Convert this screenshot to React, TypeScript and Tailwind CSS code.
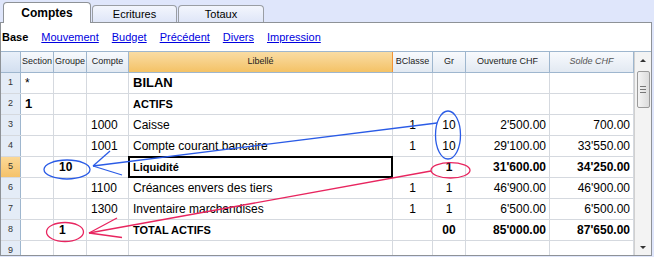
import React from 'react';

type RowData = {
  n: number;
  sec?: string;
  grp?: string;
  cpt?: string;
  lib?: string;
  bcl?: string;
  gr?: string;
  ouv?: string;
  sol?: string;
  bold?: boolean;
  secBold?: boolean;
  big?: boolean;
  selected?: boolean;
};

const rows: RowData[] = [
  { n: 1, sec: '*', lib: 'BILAN', big: true },
  { n: 2, sec: '1', secBold: true, lib: 'ACTIFS', bold: true },
  { n: 3, cpt: '1000', lib: 'Caisse', bcl: '1', gr: '10', ouv: "2'500.00", sol: '700.00' },
  { n: 4, cpt: '1001', lib: 'Compte courant bancaire', bcl: '1', gr: '10', ouv: "29'100.00", sol: "33'550.00" },
  { n: 5, grp: '10', lib: 'Liquidité', gr: '1', ouv: "31'600.00", sol: "34'250.00", bold: true, selected: true },
  { n: 6, cpt: '1100', lib: 'Créances envers des tiers', bcl: '1', gr: '1', ouv: "46'900.00", sol: "46'900.00" },
  { n: 7, cpt: '1300', lib: 'Inventaire marchandises', bcl: '1', gr: '1', ouv: "6'500.00", sol: "6'500.00" },
  { n: 8, grp: '1', lib: 'TOTAL ACTIFS', gr: '00', ouv: "85'000.00", sol: "87'650.00", bold: true },
  { n: 9 },
];

const cell = 'h-full shrink-0 border-r border-[#d5d9df] flex items-center';
const head = 'h-full shrink-0 border-r border-[#9eb6ce] flex items-center justify-center text-[9px] text-[#222] bg-linear-to-b from-[#f8fafd] to-[#e2e9f2]';

function Row({ r }: { r: RowData }) {
  const b = r.bold ? 'font-bold' : '';
  return (
    <div className="flex h-[21px] border-b border-[#d5d9df] text-[12px] text-black">
      <div
        className={
          'h-full w-[20px] shrink-0 border-r border-[#9eb6ce] flex items-center justify-center text-[9px] text-[#333] ' +
          (r.selected ? 'bg-linear-to-b from-[#fbd896] to-[#f5c26a]' : 'bg-[#e4ecf7]')
        }
      >
        {r.n}
      </div>
      <div className={cell + ' w-[33px] pl-[4px] ' + (r.secBold ? 'font-bold text-[13px]' : '')}>{r.sec}</div>
      <div className={cell + ' w-[33px] pl-[5px] font-bold'}>{r.grp}</div>
      <div className={cell + ' w-[42px] pl-[4px]'}>{r.cpt}</div>
      <div
        className={
          cell +
          ' relative w-[264px] pl-[4px] ' +
          (r.big ? 'font-bold text-[13px]' : r.bold ? 'font-bold text-[11px]' : '')
        }
      >
        {r.lib}
        {r.selected && (
          <div className="absolute -top-px -left-px -right-px -bottom-px border-2 border-black" />
        )}
      </div>
      <div className={cell + ' w-[40px] justify-center'}>{r.bcl}</div>
      <div className={cell + ' w-[33px] justify-center ' + b}>{r.gr}</div>
      <div className={cell + ' w-[84px] justify-end pr-[3px] ' + b}>{r.ouv}</div>
      <div className={cell + ' w-[84px] justify-end pr-[3px] ' + b}>{r.sol}</div>
    </div>
  );
}

function Scrollbar() {
  return (
    <div className="w-[17px] h-full shrink-0 bg-[#f3f3f3] border-l border-[#d0d0d0] flex flex-col items-center">
      <div className="h-[17px] w-full flex items-center justify-center">
        <div className="w-0 h-0 border-l-[3px] border-r-[3px] border-b-[3px] border-l-transparent border-r-transparent border-b-[#333]" />
      </div>
      <div className="mt-[2px] w-[13px] h-[37px] rounded-[2px] border border-[#9a9a9a] bg-linear-to-r from-[#f4f4f4] to-[#dcdcdc] flex flex-col items-center justify-center gap-[2px]">
        <div className="w-[6px] h-px bg-[#777]" />
        <div className="w-[6px] h-px bg-[#777]" />
        <div className="w-[6px] h-px bg-[#777]" />
      </div>
      <div className="flex-1" />
      <div className="h-[17px] w-full flex items-center justify-center">
        <div className="w-0 h-0 border-l-[3px] border-r-[3px] border-t-[3px] border-l-transparent border-r-transparent border-t-[#333]" />
      </div>
    </div>
  );
}

export default function App() {
  return (
    <div className="relative w-[654px] h-[257px] overflow-hidden bg-[#dfe6fb] font-['Liberation_Sans',Arial,sans-serif]">
      {/* Tabs */}
      <div className="flex items-end h-[22px] pl-[3px]">
        <div className="relative z-10 -mb-px h-[21px] w-[88px] bg-white border border-b-0 border-[#8e9297] rounded-t-[4px] flex items-center justify-center text-[12px] font-bold text-black">
          Comptes
        </div>
        <div className="ml-px h-[17px] w-[85px] border border-b-0 border-[#9a9ea4] rounded-t-[4px] bg-linear-to-b from-[#f3f6fd] to-[#dfe6f8] flex items-center justify-center text-[11px] text-black">
          Ecritures
        </div>
        <div className="ml-px h-[17px] w-[86px] border border-b-0 border-[#9a9ea4] rounded-t-[4px] bg-linear-to-b from-[#f3f6fd] to-[#dfe6f8] flex items-center justify-center text-[11px] text-black">
          Totaux
        </div>
      </div>

      {/* Panel */}
      <div className="w-[652px] h-[234px] bg-white border border-[#8e9297] overflow-hidden">
        <div className="h-[28px] flex items-center gap-[13px] pl-px text-[11px]">
          <span className="font-bold text-black">Base</span>
          {['Mouvement', 'Budget', 'Précédent', 'Divers', 'Impression'].map((l) => (
            <span key={l} className="text-[#0000e0] underline">
              {l}
            </span>
          ))}
        </div>

        <div className="flex h-[205px] border-t border-[#9eb6ce]">
          <div className="w-[633px] shrink-0">
            <div className="flex h-[21px] border-b border-[#9eb6ce]">
              <div className="h-full w-[20px] shrink-0 border-r border-[#9eb6ce] bg-linear-to-b from-[#e9f0fa] to-[#d3dff0]" />
              <div className={head + ' w-[33px]'}>Section</div>
              <div className={head + ' w-[33px]'}>Groupe</div>
              <div className={head + ' w-[42px]'}>Compte</div>
              <div className="h-full w-[264px] shrink-0 border-r border-[#f29436] flex items-center justify-center text-[9px] text-[#222] bg-linear-to-b from-[#f9dca3] to-[#f4c265]">
                Libellé
              </div>
              <div className={head + ' w-[40px]'}>BClasse</div>
              <div className={head + ' w-[33px]'}>Gr</div>
              <div className={head + ' w-[84px]'}>Ouverture CHF</div>
              <div className={head + ' w-[84px] italic text-[#555]'}>Solde CHF</div>
            </div>
            {rows.map((r) => (
              <Row key={r.n} r={r} />
            ))}
          </div>
          <Scrollbar />
        </div>
      </div>

      {/* Annotations */}
      <svg className="absolute top-0 left-0 pointer-events-none" width="654" height="257" viewBox="0 0 654 257" fill="none">
        <g stroke="#2a5be6" strokeWidth="1.3">
          <ellipse cx="448" cy="135" rx="12.5" ry="24" />
          <ellipse cx="67" cy="169.5" rx="23" ry="9.5" />
          <line x1="93" y1="166" x2="110" y2="151" />
          <line x1="93" y1="166" x2="437" y2="123" />
          <line x1="93" y1="166" x2="122" y2="175" />
        </g>
        <g stroke="#e8255f" strokeWidth="1.3">
          <ellipse cx="450.5" cy="170.3" rx="19.5" ry="7.7" />
          <ellipse cx="65" cy="232" rx="18.5" ry="9.5" />
          <line x1="89" y1="233" x2="117" y2="218" />
          <line x1="89" y1="233" x2="431" y2="171" />
          <line x1="89" y1="233" x2="122" y2="237.5" />
        </g>
      </svg>
    </div>
  );
}
